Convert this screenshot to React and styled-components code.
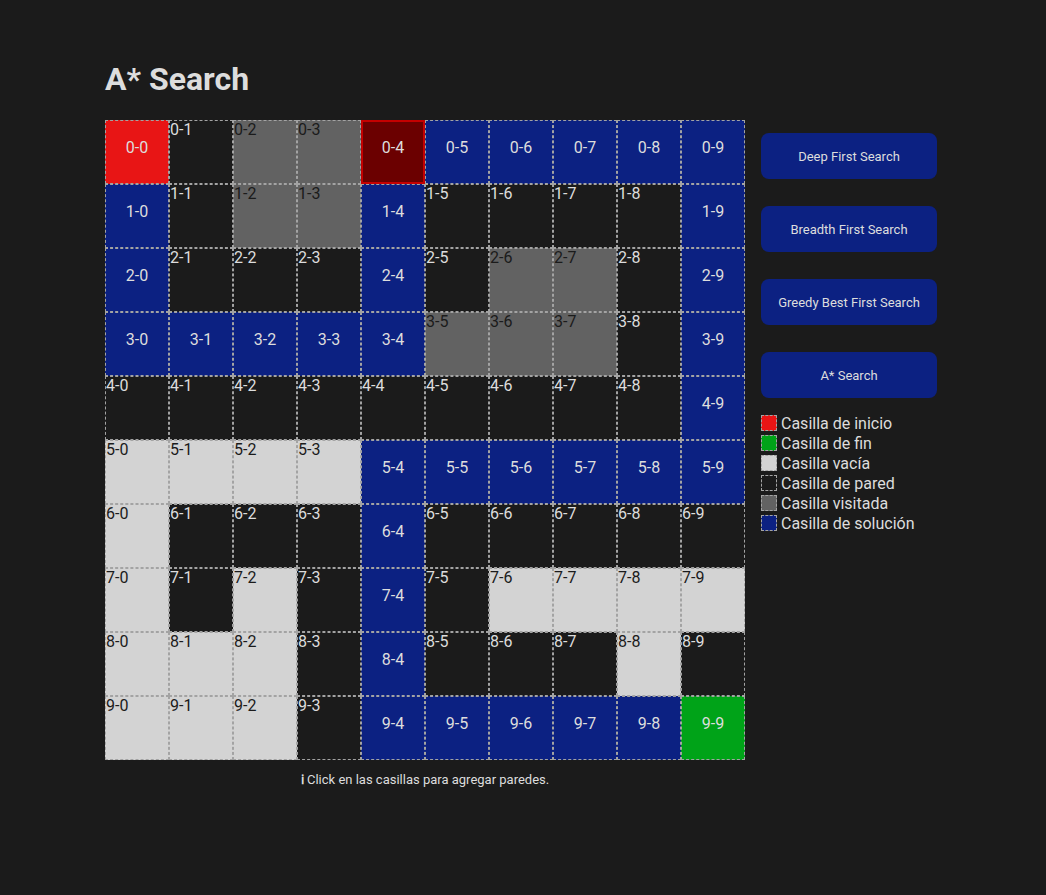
import React from 'react';
import styled, { createGlobalStyle, css } from 'styled-components';

const GlobalStyles = createGlobalStyle`
  body {
    margin: 0;
    background: #1b1b1b;
    font-family: Roboto, "Liberation Sans", Arial, sans-serif;
    color: #dddddd;
  }
  *, ::before, ::after {
    box-sizing: border-box;
  }
`;

const COLORS = {
  start: '#e81515',
  end: '#00a318',
  empty: '#d3d3d3',
  wall: '#1b1b1b',
  visited: '#626262',
  path: '#0c2182',
  current: '#6b0000',
};

const Page = styled.main`
  padding: 60px 0 0 105px;
  min-height: 895px;
`;

const Title = styled.h1`
  margin: 0 0 22px;
  font-size: 32px;
  font-weight: 700;
  line-height: 38px;
  color: #dddddd;
`;

const Layout = styled.div`
  display: flex;
  gap: 16px;
  align-items: flex-start;
`;

const Board = styled.div`
  width: 640px;
`;

const Grid = styled.div`
  display: grid;
  grid-template-columns: repeat(10, 64px);
  grid-auto-rows: 64px;
`;

const Cell = styled.div`
  border: 1px dashed #a3a3a3;
  background: ${p => COLORS[p.$kind]};
  font-size: 16px;
  line-height: 18px;
  color: ${p => (p.$kind === 'empty' || p.$kind === 'visited' ? '#1b1b1b' : '#dddddd')};
  display: flex;
  align-items: flex-start;
  justify-content: flex-start;
  ${p => p.$centered && css`
    align-items: center;
    justify-content: center;
    padding-bottom: 8px;
    color: #dddddd;
  `}
  ${p => p.$kind === 'current' && css`
    border: 2px solid #c40000;
  `}
`;

const Hint = styled.p`
  margin: 10px 0 0;
  text-align: center;
  font-size: 13px;
  color: #dddddd;
`;

const InfoMark = styled.span`
  font-weight: 700;
`;

const Sidebar = styled.aside`
  padding-top: 13px;
  display: flex;
  flex-direction: column;
  width: 176px;
`;

const AlgoButton = styled.button`
  width: 176px;
  height: 46px;
  border: none;
  border-radius: 8px;
  background: #0c2182;
  color: #dddddd;
  font-family: inherit;
  font-size: 13px;
  margin-bottom: 27px;
  cursor: pointer;
  &:last-of-type {
    margin-bottom: 15px;
  }
`;

const Legend = styled.ul`
  list-style: none;
  margin: 0;
  padding: 0;
`;

const LegendItem = styled.li`
  display: flex;
  align-items: center;
  gap: 4px;
  height: 20px;
  font-size: 16px;
  white-space: nowrap;
`;

const Swatch = styled.span`
  width: 16px;
  height: 16px;
  border: 1px dashed #a3a3a3;
  background: ${p => COLORS[p.$kind]};
`;

const MAP = [
  'SWVVCPPPPP',
  'PWVVPWWWWP',
  'PWWWPWVVWP',
  'PPPPPVVVWP',
  'WWWWWWWWWP',
  'EEEEPPPPPP',
  'EWWWPWWWWW',
  'EWEWPWEEEE',
  'EEEWPWWWEW',
  'EEEWPPPPPF',
];

const KIND = {
  S: 'start',
  F: 'end',
  E: 'empty',
  W: 'wall',
  V: 'visited',
  P: 'path',
  C: 'current',
};

const ALGORITHMS = [
  'Deep First Search',
  'Breadth First Search',
  'Greedy Best First Search',
  'A* Search',
];

const LEGEND = [
  ['start', 'Casilla de inicio'],
  ['end', 'Casilla de fin'],
  ['empty', 'Casilla vacía'],
  ['wall', 'Casilla de pared'],
  ['visited', 'Casilla visitada'],
  ['path', 'Casilla de solución'],
];

export default function App() {
  return (
    <>
      <GlobalStyles />
      <Page>
        <Title>A* Search</Title>
        <Layout>
          <Board>
            <Grid>
              {MAP.map((row, r) =>
                row.split('').map((ch, c) => {
                  const kind = KIND[ch];
                  const centered = ['start', 'end', 'path', 'current'].includes(kind);
                  return (
                    <Cell key={`${r}-${c}`} $kind={kind} $centered={centered}>
                      {r}-{c}
                    </Cell>
                  );
                })
              )}
            </Grid>
            <Hint><InfoMark>ℹ</InfoMark> Click en las casillas para agregar paredes.</Hint>
          </Board>
          <Sidebar>
            {ALGORITHMS.map(a => (
              <AlgoButton key={a}>{a}</AlgoButton>
            ))}
            <Legend>
              {LEGEND.map(([kind, label]) => (
                <LegendItem key={kind}>
                  <Swatch $kind={kind} />
                  {label}
                </LegendItem>
              ))}
            </Legend>
          </Sidebar>
        </Layout>
      </Page>
    </>
  );
}
